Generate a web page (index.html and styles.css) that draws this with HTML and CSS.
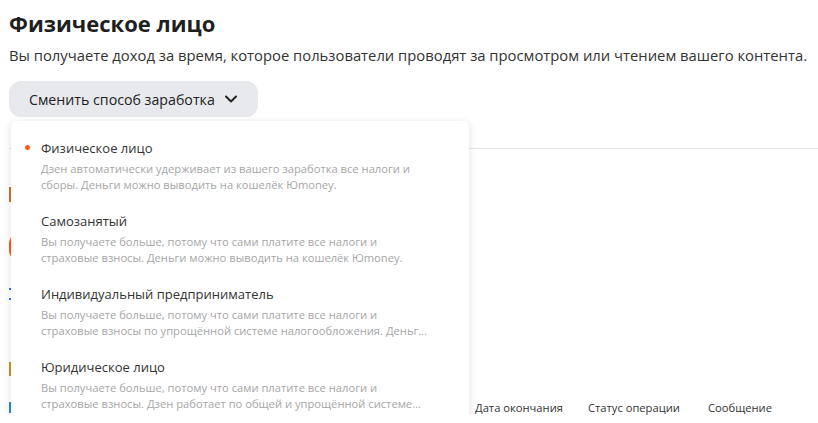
FILE: index.html
```html
<!DOCTYPE html>
<html lang="ru">

<head>
    <meta charset="UTF-8">
    <meta name="viewport" content="width=device-width, initial-scale=1">
    <title>Монетизация</title>
    <link rel="stylesheet" href="styles.css">
</head>

<body>
    <div class="page">
        <h1 class="title">Физическое лицо</h1>
        <p class="subtitle">Вы получаете доход за время, которое пользователи проводят за просмотром или чтением вашего контента.</p>

        <div class="switcher">
            <button class="switch-btn">
                Сменить способ заработка
                <svg width="14" height="14" viewBox="0 0 14 14"><polyline points="2,4.5 7,9.5 12,4.5" fill="none" stroke="#222" stroke-width="2" stroke-linecap="round" stroke-linejoin="round"/></svg>
            </button>

            <!-- выпадающее меню -->
            <div class="menu">
                <div class="menu-item active">
                    <div class="item-title">Физическое лицо</div>
                    <div class="item-desc">Дзен автоматически удерживает из вашего заработка все налоги и сборы. Деньги можно выводить на кошелёк Юmoney.</div>
                </div>
                <div class="menu-item">
                    <div class="item-title">Самозанятый</div>
                    <div class="item-desc">Вы получаете больше, потому что сами платите все налоги и страховые взносы. Деньги можно выводить на кошелёк Юmoney.</div>
                </div>
                <div class="menu-item">
                    <div class="item-title">Индивидуальный предприниматель</div>
                    <div class="item-desc">Вы получаете больше, потому что сами платите все налоги и страховые взносы по упрощённой системе налогообложения. Деньги можно выводить на расчётный счёт.</div>
                </div>
                <div class="menu-item">
                    <div class="item-title">Юридическое лицо</div>
                    <div class="item-desc">Вы получаете больше, потому что сами платите все налоги и страховые взносы. Дзен работает по общей и упрощённой системе налогообложения.</div>
                </div>
            </div>
        </div>

        <div class="tabs"></div>

        <div class="content">
            <div class="balance-label"></div>
            <div class="withdraw-btn"></div>
            <div class="link-line"></div>
            <div class="link-line second"></div>
            <div class="history-label"></div>
            <div class="table-head">
                <span class="col col-type"></span>
                <span class="col col-end">Дата окончания</span>
                <span class="col col-status">Статус операции</span>
                <span class="col col-msg">Сообщение</span>
            </div>
        </div>
    </div>
</body>

</html>
```

FILE: styles.css
```css
body {
    margin: 0;
    font-family: "Open Sans", "Noto Sans", Arial, sans-serif;
    color: #222;
    background-color: #fff;
    overflow: hidden;
}

.page {
    padding: 8px 0 0 9px;
}

.title {
    margin: 0;
    font-size: 22px;
    line-height: 30px;
    font-weight: 700;
    color: #1f1f1f;
}

.subtitle {
    margin: 7px 0 0;
    font-size: 14.8px;
    line-height: 20px;
    color: #333;
    white-space: nowrap;
}

.switcher {
    position: relative;
    margin-top: 16px;
}

.switch-btn {
    display: flex;
    align-items: center;
    gap: 9px;
    height: 36px;
    width: 249px;
    padding: 0 20px;
    border: none;
    border-radius: 12px;
    background-color: #e8e9ed;
    font-family: inherit;
    font-size: 14.2px;
    color: #222;
}

.menu {
    position: absolute;
    top: 40px;
    left: 2px;
    width: 458px;
    padding: 8px 0;
    background-color: #fff;
    border-radius: 6px;
    box-shadow: 0 2px 10px rgba(0, 0, 0, 0.12);
    z-index: 2;
}

.menu-item {
    position: relative;
    padding: 10px 30px 9px;
}

.menu-item.active::before {
    content: "";
    position: absolute;
    left: 14px;
    top: 16px;
    width: 5px;
    height: 5px;
    border-radius: 50%;
    background-color: #ff5b1f;
}

.item-title {
    font-size: 13px;
    line-height: 18px;
    color: #333;
}

.item-desc {
    margin-top: 4px;
    width: 392px;
    font-size: 11.2px;
    line-height: 16px;
    color: #a6a6a6;
    display: -webkit-box;
    -webkit-line-clamp: 2;
    -webkit-box-orient: vertical;
    overflow: hidden;
}

.tabs {
    margin-top: 31px;
    height: 1px;
    background-color: #e6e6e6;
}

.content {
    display: flex;
    flex-direction: column;
    align-items: flex-start;
}

.balance-label {
    margin-top: 38px;
    width: 60px;
    height: 15px;
    background-color: #c7782c;
}

.withdraw-btn {
    margin-top: 30px;
    width: 160px;
    height: 30px;
    border-radius: 12px;
    background-color: #ff5a1f;
}

.link-line {
    margin-top: 26px;
    width: 90px;
    height: 2px;
    background-color: #2f6ee8;
}

.link-line.second {
    margin-top: 8px;
}

.history-label {
    margin-top: 62px;
    width: 80px;
    height: 14px;
    background-color: #d4901f;
}

.table-head {
    display: flex;
    align-items: center;
    margin-top: 23px;
    height: 16px;
    font-size: 11.2px;
    color: #333;
    white-space: nowrap;
}

.col-type {
    width: 464px;
    height: 11px;
    border-left: 2px solid #2a8ad0;
}

.col-end {
    width: 113px;
}

.col-status {
    width: 120px;
}
```
